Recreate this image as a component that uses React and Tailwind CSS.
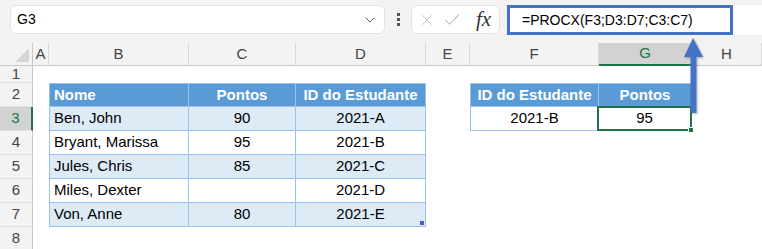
import React from 'react';
import { X, Check, ChevronDown } from 'lucide-react';

const cols = ['A', 'B', 'C', 'D', 'E', 'F', 'G', 'H'];

const students = [
    { name: 'Ben, John', pts: '90', id: '2021-A' },
    { name: 'Bryant, Marissa', pts: '95', id: '2021-B' },
    { name: 'Jules, Chris', pts: '85', id: '2021-C' },
    { name: 'Miles, Dexter', pts: '', id: '2021-D' },
    { name: 'Von, Anne', pts: '80', id: '2021-E' },
];

const HeadCell = ({ children, className = '' }) => (
    <div className={`flex items-center bg-[#5b9bd5] text-white font-bold border-b border-r border-[#9bc2e6] ${className}`}>
        {children}
    </div>
);

const Cell = ({ children, band, className = '' }) => (
    <div className={`flex items-center border-b border-r border-[#9bc2e6] ${band ? 'bg-[#ddebf7]' : 'bg-white'} ${className}`}>
        {children}
    </div>
);

const RowLabel = ({ n, active }) => (
    <div
        className={`flex items-center justify-center border-b border-[#e1e1e1] text-[15px] ${
            active
                ? 'bg-[#d2d2d2] text-[#217346] border-r-2 border-r-[#217346]'
                : 'bg-[#f3f3f3] text-[#444] border-r border-r-[#c8c8c8]'
        }`}
    >
        {n}
    </div>
);

const App = () => {
    return (
        <div className="relative w-[762px] h-[249px] overflow-hidden bg-white font-['Liberation_Sans',sans-serif] text-black">
            {/* Formula bar */}
            <div className="flex h-[43px] bg-[#f3f3f3] pt-[5px] pl-[10px]">
                <div className="flex items-center justify-between w-[375px] h-[29px] bg-white border border-[#e3e3e3] rounded-md px-[6px] text-[14px]">
                    <span>G3</span>
                    <ChevronDown className="w-4 h-4 text-[#555]" strokeWidth={1.5} />
                </div>
                <div className="flex flex-col items-center justify-center gap-[2px] w-[26px] h-[29px]">
                    <span className="w-[3px] h-[3px] bg-[#555]" />
                    <span className="w-[3px] h-[3px] bg-[#555]" />
                    <span className="w-[3px] h-[3px] bg-[#555]" />
                </div>
                <div className="flex items-center w-[89px] h-[29px] bg-white border border-[#e3e3e3] rounded-md pl-[6px]">
                    <X className="w-[18px] h-[18px] text-[#c4c4c4]" strokeWidth={1.3} />
                    <Check className="w-[20px] h-[20px] text-[#c4c4c4] ml-[6px]" strokeWidth={1.3} />
                    <span className="ml-[14px] font-['Liberation_Serif',serif] italic text-[21px] text-[#333] leading-none">
                        fx
                    </span>
                </div>
                <div className="flex-1 ml-[7px] h-[30px] bg-white">
                    <div className="flex items-center w-[226px] h-[30px] border-[3px] border-[#4472c4] pl-[12px] text-[14px]">
                        =PROCX(F3;D3:D7;C3:C7)
                    </div>
                </div>
            </div>

            {/* Sheet grid */}
            <div className="grid grid-cols-[33px_16px_140px_107px_130px_44px_129px_93px_1fr] grid-rows-[23px_17px_24px_24px_24px_24px_24px_24px_24px] text-[15px]">
                {/* column headers */}
                <div className="relative bg-[#f3f3f3] border-r border-b border-[#c8c8c8]">
                    <div className="absolute right-[3px] bottom-[3px] w-0 h-0 border-l-[14px] border-l-transparent border-b-[14px] border-b-[#d6d6d6]" />
                </div>
                {cols.map((c) => (
                    <div
                        key={c}
                        className={`flex items-center justify-center text-[15px] ${
                            c === 'G'
                                ? 'bg-[#d2d2d2] text-[#217346] border-b-2 border-b-[#217346] border-r border-r-[#c8c8c8]'
                                : 'bg-[#f3f3f3] text-[#444] border-b border-b-[#c8c8c8] border-r border-r-[#d8d8d8]'
                        }`}
                    >
                        {c}
                    </div>
                ))}

                {/* row 1 */}
                <RowLabel n="1" />
                <div className="col-span-8" />

                {/* row 2 */}
                <RowLabel n="2" />
                <div />
                <HeadCell className="pl-[4px] border-l border-t">Nome</HeadCell>
                <HeadCell className="justify-center border-t">Pontos</HeadCell>
                <HeadCell className="justify-center border-t">ID do Estudante</HeadCell>
                <div />
                <HeadCell className="justify-center border-l border-t">ID do Estudante</HeadCell>
                <HeadCell className="justify-center border-t">Pontos</HeadCell>
                <div />

                {students.map((s, i) => {
                    const row = i + 3;
                    const band = i % 2 === 0;
                    return (
                        <React.Fragment key={s.id}>
                            <RowLabel n={row} active={row === 3} />
                            <div />
                            <Cell band={band} className="pl-[4px] border-l">{s.name}</Cell>
                            <Cell band={band} className="justify-center">{s.pts}</Cell>
                            <Cell band={band} className="justify-center relative">
                                {s.id}
                                {row === 7 && (
                                    <span className="absolute right-[1px] bottom-[1px] w-[4px] h-[4px] bg-[#4a5fc1]" />
                                )}
                            </Cell>
                            <div />
                            {row === 3 ? (
                                <>
                                    <div className="flex items-center justify-center border-l border-b border-r border-[#9bc2e6] bg-white">
                                        2021-B
                                    </div>
                                    <div className="relative flex items-center justify-center border-2 border-[#217346] -ml-[2px] -mt-[1px] bg-white">
                                        95
                                        <span className="absolute -right-[4px] -bottom-[4px] w-[6px] h-[6px] bg-[#217346] border border-white" />
                                    </div>
                                </>
                            ) : (
                                <>
                                    <div />
                                    <div />
                                </>
                            )}
                            <div />
                        </React.Fragment>
                    );
                })}

                {/* row 8 */}
                <RowLabel n="8" />
                <div className="col-span-8" />
            </div>

            {/* Arrow pointing to the formula */}
            <svg className="absolute left-[680px] top-[35px]" width="30" height="82" viewBox="0 0 30 82">
                <defs>
                    <filter id="sh" x="-50%" y="-20%" width="200%" height="140%">
                        <feDropShadow dx="1" dy="1" stdDeviation="1" floodColor="#000" floodOpacity="0.3" />
                    </filter>
                </defs>
                <path d="M13 3 L23 22 L16.5 22 L16.5 78 L10.5 78 L10.5 22 L4 22 Z" fill="#4472c4" filter="url(#sh)" />
            </svg>
        </div>
    );
};

export default App;
